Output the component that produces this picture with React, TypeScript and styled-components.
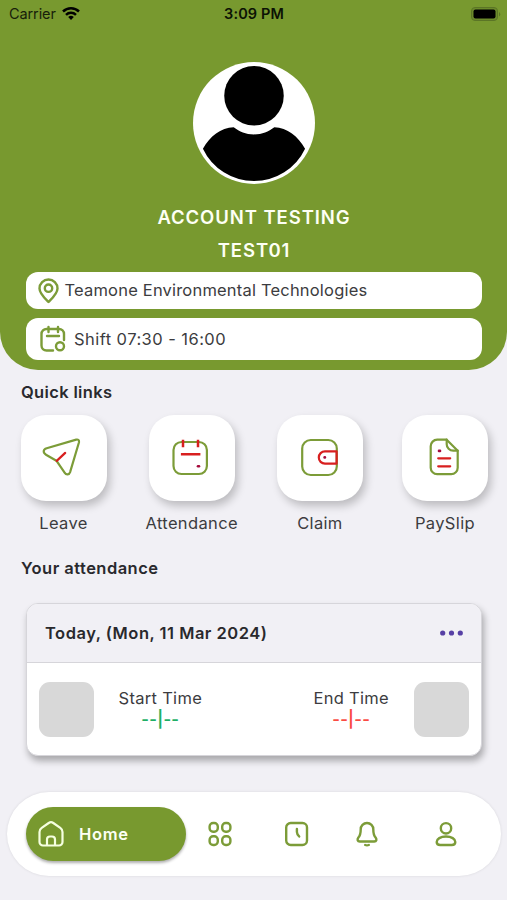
import React from 'react';
import styled, { createGlobalStyle } from 'styled-components';

const GREEN = '#78992f';
const LINE = '#7c9c38';
const RED = '#d81f1f';

const GlobalStyle = createGlobalStyle`
  * { box-sizing: border-box; }
  body { margin: 0; background: #f1f0f5; }
`;

const Screen = styled.div`
  width: 507px;
  height: 900px;
  overflow: hidden;
  background: #f1f0f5;
  color: #3c3c40;
  font-family: Inter, 'Liberation Sans', sans-serif;
  font-size: 16.5px;
  line-height: 20px;
`;

const Header = styled.header`
  display: flex;
  flex-direction: column;
  align-items: center;
  height: 370px;
  padding: 0 25px 0 26px;
  border-radius: 0 0 38px 38px;
  background: ${GREEN};
`;

const StatusBar = styled.div`
  display: grid;
  grid-template-columns: 1fr auto 1fr;
  align-items: center;
  align-self: stretch;
  height: 28px;
  margin: 0 -19px 0 -17px;
  color: #17200a;
  font-size: 14.5px;
`;

const Carrier = styled.div`
  display: flex;
  align-items: center;
  gap: 6px;
  letter-spacing: -0.1px;
`;

const Clock = styled.div`
  margin-right: 2px;
  color: #0c1204;
  font-weight: 600;
  letter-spacing: 0.1px;
`;

const Battery = styled.svg`
  justify-self: end;
`;

const Avatar = styled.svg`
  flex: none;
  margin: 34px 1px 0 0;
`;

const Name = styled.div<{ $gap: number }>`
  margin-top: ${(p) => p.$gap}px;
  color: #fdfff4;
  font-size: 18.5px;
  font-weight: 600;
  line-height: 24px;
  letter-spacing: 0.92px;
`;

const InfoPill = styled.div<{
  $height: number;
  $top: number;
  $gap: number;
  $pad: number;
  $spacing: number;
}>`
  display: flex;
  flex: none;
  align-items: center;
  align-self: stretch;
  gap: ${(p) => p.$gap}px;
  height: ${(p) => p.$height}px;
  margin-top: ${(p) => p.$top}px;
  padding-left: ${(p) => p.$pad}px;
  border-radius: 12px;
  background: #fff;
  letter-spacing: ${(p) => p.$spacing}px;
`;

const PillText = styled.span<{ $lift?: boolean }>`
  padding-bottom: ${(p) => (p.$lift ? 2 : 0)}px;
`;

const SectionTitle = styled.h2<{ $top: number; $spacing: number }>`
  margin: ${(p) => p.$top}px 0 0 21px;
  color: #29292d;
  font-size: 16.5px;
  font-weight: 600;
  line-height: 20px;
  letter-spacing: ${(p) => p.$spacing}px;
`;

const QuickLinks = styled.div`
  display: flex;
  justify-content: space-between;
  margin: 13px 19px 0 20.5px;
`;

const QuickLink = styled.div`
  display: flex;
  flex-direction: column;
  align-items: center;
  gap: 12px;
  letter-spacing: 0.35px;
`;

const Tile = styled.div`
  display: flex;
  align-items: center;
  justify-content: center;
  width: 86px;
  height: 86px;
  border-radius: 25px;
  background: #fff;
  box-shadow: 3px 5px 8px rgba(0, 0, 0, 0.22);
`;

const Card = styled.section`
  height: 153px;
  margin: 25px 25px 0 26px;
  border: 1px solid #d6d5da;
  border-radius: 12px;
  overflow: hidden;
  background: #fff;
  box-shadow: 2px 5px 7px rgba(0, 0, 0, 0.3);
`;

const CardHeader = styled.div`
  display: flex;
  align-items: center;
  justify-content: space-between;
  height: 59px;
  padding: 0 18px;
  border-bottom: 1px solid #d6d5da;
  background: #f1f0f5;
  color: #29292d;
  font-weight: 600;
  letter-spacing: 0.5px;
`;

const CardBody = styled.div`
  display: flex;
  align-items: center;
  height: 92px;
  padding: 0 12px;
`;

const Photo = styled.div`
  width: 55px;
  height: 55px;
  border-radius: 11px;
  background: #d8d8d8;
`;

const Time = styled.div<{ $right?: boolean }>`
  margin: ${(p) => (p.$right ? '0 25px 0 auto' : '0 0 0 24.5px')};
  text-align: center;
  letter-spacing: 0.3px;
`;

const TimeValue = styled.div<{ $color: string }>`
  color: ${(p) => p.$color};
  font-weight: 600;
  line-height: 22px;
  letter-spacing: 0.3px;
`;

const TabBar = styled.nav`
  display: flex;
  align-items: center;
  height: 84px;
  margin: 36px 6px 0 7px;
  padding: 0 41px 0 19px;
  border-radius: 42px;
  background: #fff;
  box-shadow: 0 0 3px rgba(0, 0, 0, 0.1);
`;

const HomeTab = styled.div`
  display: flex;
  align-items: center;
  gap: 14px;
  width: 160px;
  height: 54px;
  padding-left: 11px;
  border-radius: 27px;
  background: ${GREEN};
  box-shadow: 0 2px 3px rgba(0, 0, 0, 0.32);
  color: #fdfff4;
  font-weight: 600;
  letter-spacing: 0.7px;
`;

const Tab = styled.div<{ $left: number }>`
  display: flex;
  margin-left: ${(p) => p.$left}px;
`;

const Stroke = styled.svg<{ $w?: number; $color?: string }>`
  flex: none;
  overflow: visible;
  fill: none;
  stroke: ${(p) => p.$color ?? LINE};
  stroke-width: ${(p) => p.$w ?? 2.2};
  stroke-linecap: round;
  stroke-linejoin: round;
`;

const links = [
  {
    label: 'Leave',
    icon: (
      <g transform="translate(-2.8 -0.7)">
        <path d="M5.500 11 35 2.300q3.200-.6 2.800 2.600L28.900 34.800c-1 3-4 3-5.500.6l-8.200-12L4.800 17.400c-3.300-2-3-5.300.7-6.400Z" />
        <path d="m15.500 23.600 8.500-8" stroke={RED} />
      </g>
    ),
  },
  {
    label: 'Attendance',
    icon: (
      <>
        <rect x="1.500" y="4" width="33.400" height="32" rx="8" />
        <path d="M11 1.700v7.500M26 1.700v7.500M8.900 16.300h19.500" stroke={RED} strokeLinecap="butt" strokeWidth="2.500" />
        <path d="M26 28.300h1" stroke="#a50b3c" strokeWidth="2.600" />
      </>
    ),
  },
  {
    label: 'Claim',
    icon: (
      <>
        <rect x="2.200" y="2" width="34.600" height="35" rx="8.500" />
        <path d="M36.600 13.300H25a6.200 6.200 0 0 0 0 12.400h11.600Z" stroke={RED} />
        <path d="M24.600 19.400h.3" stroke="#a50b3c" strokeWidth="2.600" />
      </>
    ),
  },
  {
    label: 'PaySlip',
    icon: (
      <g transform="translate(-0.8 -0.8)">
        <path d="M22.500 2.500H13A6.500 6.500 0 0 0 6.500 9v21.500A6.500 6.500 0 0 0 13 37h14a6.500 6.500 0 0 0 6.500-6.500v-17Z" />
        <path d="M22.500 2.500V7a6.500 6.500 0 0 0 6.500 6.500h4.500" />
        <path d="M14 21.100h12M14 29.100h12" stroke={RED} />
        <path d="M14.800 13.700h1" stroke="#a50b3c" strokeWidth="2.600" />
      </g>
    ),
  },
];

export default function App() {
  return (
    <>
      <GlobalStyle />
      <Screen>
        <Header>
          <StatusBar>
            <Carrier>
              Carrier
              <svg width="18" height="16" viewBox="0 0 18 16" fill="none" stroke="#000" strokeWidth="2.500">
                <path d="M1 5.500a11.500 11.500 0 0 1 16 0M4 8.800a7.200 7.200 0 0 1 10 0" />
                <path d="M9 14 6.200 11.100a4 4 0 0 1 5.600 0Z" fill="#000" stroke="none" />
              </svg>
            </Carrier>
            <Clock>3:09 PM</Clock>
            <Battery width="30" height="15" viewBox="0 0 30 15">
              <rect x="0.500" y="0.500" width="26" height="13" rx="3.500" fill="#6b8a2b" stroke="#5b7526" />
              <rect x="2.500" y="2.500" width="22" height="9" rx="2" fill="#000" />
              <path d="M28 5q2.500 2.200 0 4.500Z" fill="#5b7526" />
            </Battery>
          </StatusBar>
          <Avatar width="122" height="122" viewBox="0 0 123 123">
            <circle cx="61.500" cy="61.500" r="61.500" fill="#fff" />
            <circle cx="61.500" cy="34" r="30" />
            <path d="M10 87.500C17 75 28 66 41 65.800c6 4.500 12 7.200 20.500 7.200s14.500-2.700 20.500-7.200c13 .2 24 9.200 31 21.700a57 57 0 0 1-103 0Z" />
          </Avatar>
          <Name $gap={21}>ACCOUNT TESTING</Name>
          <Name $gap={9}>TEST01</Name>
          <InfoPill $height={37} $top={10} $gap={5.5} $pad={12} $spacing={0.19}>
            <Stroke width="21" height="26" viewBox="0 0 21 26" $w={2.4}>
              <path d="M10.500 24C6 19.500 1.500 15.500 1.500 10.500a9 9 0 0 1 18 0c0 5-4.500 9-9 13.500Z" />
              <circle cx="10.500" cy="10.200" r="3.700" />
            </Stroke>
            <PillText $lift>Teamone Environmental Technologies</PillText>
          </InfoPill>
          <InfoPill $height={42} $top={9} $gap={7} $pad={14} $spacing={0.45}>
            <Stroke width="27" height="26" viewBox="0 0 27 26" $w={2.4}>
              <path d="M24 14V8a5 5 0 0 0-5-5H6.500a5 5 0 0 0-5 5v11.500a5 5 0 0 0 5 5h6.500" />
              <path d="M8.500 1v5M18 1v5M7 10h12" />
              <circle cx="20" cy="20.300" r="4" />
            </Stroke>
            <PillText>Shift 07:30 - 16:00</PillText>
          </InfoPill>
        </Header>

        <SectionTitle $top={12} $spacing={0.35}>Quick links</SectionTitle>
        <QuickLinks>
          {links.map((link) => (
            <QuickLink key={link.label}>
              <Tile>
                <Stroke width="40" height="40" viewBox="0 0 40 40">{link.icon}</Stroke>
              </Tile>
              {link.label}
            </QuickLink>
          ))}
        </QuickLinks>

        <SectionTitle $top={25} $spacing={0.46}>Your attendance</SectionTitle>
        <Card>
          <CardHeader>
            Today, (Mon, 11 Mar 2024)
            <svg width="23" height="6" viewBox="0 0 23 6" fill="#5740a5">
              <circle cx="2.700" cy="3" r="2.600" />
              <circle cx="11.500" cy="3" r="2.600" />
              <circle cx="20.300" cy="3" r="2.600" />
            </svg>
          </CardHeader>
          <CardBody>
            <Photo />
            <Time>
              Start Time
              <TimeValue $color="#20ae64">--|--</TimeValue>
            </Time>
            <Time $right>
              End Time
              <TimeValue $color="#fa4b42">--|--</TimeValue>
            </Time>
            <Photo />
          </CardBody>
        </Card>

        <TabBar>
          <HomeTab>
            <Stroke width="28" height="28" viewBox="0 0 28 28" $color="#f5ffe0" $w={2.2}>
              <path d="M2.500 12a5 5 0 0 1 2.200-4.200L11.700 3a4 4 0 0 1 4.600 0l7 4.800A5 5 0 0 1 25.500 12v10a3.500 3.500 0 0 1-3.500 3.500H6A3.500 3.500 0 0 1 2.500 22Z" />
              <path d="M10 25v-5.500a3 3 0 0 1 3-3h2a3 3 0 0 1 3 3V25" />
            </Stroke>
            Home
          </HomeTab>
          <Tab $left={21}>
            <Stroke width="26" height="26" viewBox="0 0 26 26" $w={2.4}>
              <rect x="2.600" y="2" width="8.200" height="8.800" rx="3.500" />
              <rect x="15.200" y="2" width="8.200" height="8.800" rx="3.500" />
              <rect x="2.600" y="15.200" width="8.200" height="8.800" rx="3.500" />
              <rect x="15.200" y="15.200" width="8.200" height="8.800" rx="3.500" />
            </Stroke>
          </Tab>
          <Tab $left={50.5}>
            <Stroke width="26" height="26" viewBox="0 0 26 26" $w={2.4}>
              <rect x="2.200" y="2" width="20.800" height="22" rx="4.500" />
              <path d="M12.900 8v3q0 2 2.300 4.500" />
            </Stroke>
          </Tab>
          <Tab $left={44.5}>
            <Stroke width="26" height="26" viewBox="0 0 26 26" $w={2.4}>
              <path d="M13 2a6.300 6.300 0 0 0-6.300 6.500c0 5-.7 6.300-2.300 8-1.500 2-.8 4 1.300 4h14.600c2.100 0 2.800-2 1.300-4-1.600-1.700-2.300-3-2.300-8A6.300 6.300 0 0 0 13 2Z" />
              <path d="M11.200 24q1.800.7 3.600 0" />
            </Stroke>
          </Tab>
          <Tab $left={52.5}>
            <Stroke width="26" height="26" viewBox="0 0 26 26" $w={2.4}>
              <circle cx="13" cy="7.300" r="5.200" />
              <path d="M13 15.500c-5.500 0-9.300 2.500-9.300 5.500 0 2 1.600 3 3.500 3h11.600c1.900 0 3.500-1 3.500-3 0-3-3.800-5.500-9.300-5.500Z" />
            </Stroke>
          </Tab>
        </TabBar>
      </Screen>
    </>
  );
}
